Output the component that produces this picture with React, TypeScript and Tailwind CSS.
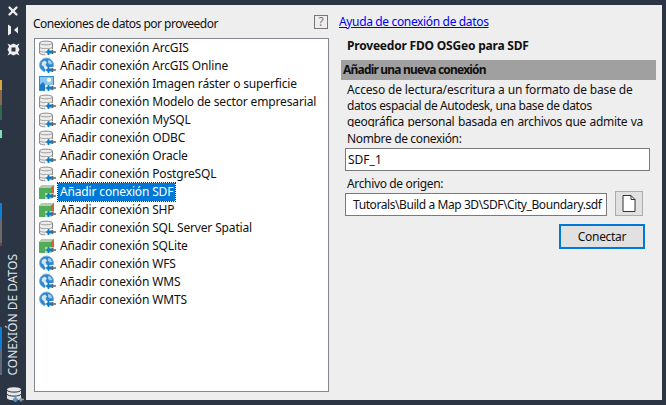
import React from 'react';
import { X } from 'lucide-react';

const Plug = () => (
  <g>
    <rect x="8" y="11.500" width="5" height="3" fill="#0f7fc4" />
    <path d="M6.500 13h2M9.500 10v6" stroke="#0f7fc4" strokeWidth="1.600" fill="none" />
    <path d="M13 13h4M13.500 11v4" stroke="#5c6670" strokeWidth="1.600" fill="none" />
  </g>
);

const DbIcon = () => (
  <svg width="18" height="18" viewBox="0 0 18 18">
    <path d="M.5 4C.5 1.500 13.500 1.500 13.500 4V14C13.500 16.500.5 16.500.5 14Z" fill="#ececec" stroke="#8a8a8a" />
    <path d="M.5 4C.5 6.400 13.500 6.400 13.500 4M.5 8C.5 10.300 13.500 10.300 13.500 8M.5 11.500C.5 13.800 13.500 13.800 13.500 11.500" fill="none" stroke="#a0a0a0" />
    <rect x="6" y="10" width="12" height="7" fill="#fff" opacity="0.8" />
    <Plug />
  </svg>
);

const GlobeIcon = () => (
  <svg width="18" height="18" viewBox="0 0 18 18">
    <circle cx="7.500" cy="8" r="7" fill="#2f86cf" stroke="#7fb4dd" />
    <path d="M3 5 6 3.500l2 2-1.500 2L8 10l-2 2.500L4.500 9.500 2.500 8Z" fill="#cfe6f7" />
    <path d="M9 3l3 1 1 3-2.500.5L9 5.500Z" fill="#9ed0f0" />
    <rect x="6" y="10" width="12" height="7" fill="#fff" opacity="0.85" />
    <Plug />
  </svg>
);

const ImageIcon = () => (
  <svg width="18" height="18" viewBox="0 0 18 18">
    <rect x="0" y="1" width="15" height="15" fill="#2f8ad2" />
    <rect x="1" y="2" width="13" height="13" fill="#8cc6ee" />
    <circle cx="10" cy="5" r="2.200" fill="#fbf6cf" />
    <path d="M1 15V10l3-3 6 8Z" fill="#1f78c4" />
    <rect x="6" y="10" width="12" height="7" fill="#fff" opacity="0.85" />
    <Plug />
  </svg>
);

const CubeIcon = () => (
  <svg width="18" height="18" viewBox="0 0 18 18">
    <path d="M0 5 3 2h12v11l-3 3H0Z" fill="#4fae57" />
    <path d="M0 5 3 2h12l-3 3Z" fill="#bdc7b4" />
    <path d="M12 5l3-3v11l-3 3Z" fill="#c8663a" />
    <rect x="6" y="10" width="12" height="7" fill="#fff" opacity="0.55" />
    <Plug />
  </svg>
);

const SidebarDb = () => (
  <svg width="18" height="18" viewBox="0 0 18 18">
    <path d="M0 3.500C0 .5 14 .5 14 3.500V12C14 15 0 15 0 12Z" fill="#e6e6e6" />
    <path d="M0 4C0 6.800 14 6.800 14 4M0 8C0 10.800 14 10.800 14 8" fill="none" stroke="#2b3543" />
    <path d="M6 13.500h5M8.500 11v5" stroke="#3f9fe4" strokeWidth="2" fill="none" />
    <path d="M12 13.500h5M14 11.500v4" stroke="#9aa3ad" strokeWidth="1.600" fill="none" />
  </svg>
);

const PinIcon = () => (
  <svg width="12" height="12" viewBox="0 0 12 12" fill="#eeeeee">
    <path d="M1 .5 4 2.500v7L1 11.500Z" />
    <path d="M11 2.500v7L7 6Z" />
  </svg>
);

const GearIcon = () => (
  <svg width="13" height="13" viewBox="0 0 13 13">
    <path d="M.5 .5 3.500 2 6.500 .5 9.500 2l3-1.500L11 3.500l1.500 3L11 9.500l1.500 3-3-1.500-3 1.500-3-1.500-3 1.500L2 9.500l-1.500-3L2 3.500Z" fill="#eeeeee" />
    <rect x="4.500" y="4.500" width="4" height="4" fill="#2b3543" />
  </svg>
);

const rows = [
  { label: 'Añadir conexión ArcGIS', icon: DbIcon },
  { label: 'Añadir conexión ArcGIS Online', icon: GlobeIcon },
  { label: 'Añadir conexión Imagen ráster o superficie', icon: ImageIcon },
  { label: 'Añadir conexión Modelo de sector empresarial', icon: DbIcon },
  { label: 'Añadir conexión MySQL', icon: DbIcon },
  { label: 'Añadir conexión ODBC', icon: DbIcon },
  { label: 'Añadir conexión Oracle', icon: DbIcon },
  { label: 'Añadir conexión PostgreSQL', icon: DbIcon },
  { label: 'Añadir conexión SDF', icon: CubeIcon, selected: true },
  { label: 'Añadir conexión SHP', icon: CubeIcon },
  { label: 'Añadir conexión SQL Server Spatial', icon: DbIcon },
  { label: 'Añadir conexión SQLite', icon: CubeIcon },
  { label: 'Añadir conexión WFS', icon: GlobeIcon },
  { label: 'Añadir conexión WMS', icon: GlobeIcon },
  { label: 'Añadir conexión WMTS', icon: GlobeIcon },
];

export default function App() {
  return (
    <div className="w-[666px] h-[405px] flex bg-[#2b3543] overflow-hidden text-[12px] leading-[16px] text-[#111] font-['Noto_Sans',sans-serif]">
      {/* sliver of the window behind the palette */}
      <div className="w-[2px] flex flex-col">
        <div className="h-[80px]" />
        <div className="h-[10px] bg-[#d9a93a]" />
        <div className="h-[15px] bg-[#8a6a4a]" />
        <div className="h-[15px] bg-[#2f6a55]" />
        <div className="h-[10px]" />
        <div className="h-[8px] bg-[#7fe0b8]" />
        <div className="h-[65px]" />
        <div className="h-[17px] bg-[#0f7fd6]" />
        <div className="h-[23px] bg-[#6a6a6a]" />
        <div className="h-[3px] bg-[#8a3a2a]" />
        <div className="h-[81px]" />
        <div className="h-[23px] bg-[#0f7fd6]" />
        <div className="h-[25px] bg-[#5a6a7a]" />
      </div>

      <aside className="w-[24px] pr-[2px] flex flex-col items-center text-[#eeeeee] pt-[4px] pb-[1px]">
        <X size={14} strokeWidth={4} />
        <div className="mt-[6px]"><PinIcon /></div>
        <div className="mt-[7px]"><GearIcon /></div>
        <div className="mt-auto mb-[10px] [writing-mode:vertical-rl] rotate-180 text-[12px] leading-[14px] text-[#dfe5ea]">
          CONEXIÓN DE DATOS
        </div>
        <div className="ml-[5px]"><SidebarDb /></div>
      </aside>

      <main className="flex-1 mt-[5px] mb-[5px] mr-[4px] bg-[#eeeeee] flex pl-[8px] pr-[6px] pt-[10px] pb-[8px]">
        <section className="w-[295px] flex flex-col">
          <h2 className="h-[23px] -ml-[1px] pt-[1px] text-[12px] font-normal tracking-[-0.5px]">Conexiones de datos por proveedor</h2>
          <ul className="flex-1 bg-white border border-[#828790] pl-[4px] tracking-[-0.15px]">
            {rows.map(({ label, icon: Icon, selected }) => (
              <li key={label} className="h-[18px] flex items-center gap-[1px]">
                <Icon />
                <span className={selected ? 'bg-[#0078d7] text-white px-[2px] h-[18px] leading-[17px] outline-1 outline-dotted outline-[#222]' : 'px-[2px]'}>{label}</span>
              </li>
            ))}
          </ul>
        </section>

        <section className="flex-1 flex flex-col ml-[-15px]">
          <div className="flex items-center h-[18px] -mt-[2px] mb-[5px]">
            <span className="w-[14px] h-[14px] border border-[#777] text-[#777] text-[12px] leading-[12px] text-center">?</span>
            <a className="ml-[11px] text-[#0000ee] underline tracking-[-0.35px]">Ayuda de conexión de datos</a>
          </div>
          <div className="pl-[27px] flex flex-col">
            <h3 className="h-[24px] pl-[6px] pt-[2px] font-bold text-[12px] tracking-[-0.2px]">Proveedor FDO OSGeo para SDF</h3>
            <div className="h-[20px] bg-[#a0a0a0] pl-[2px] font-bold text-[12px] leading-[20px] tracking-[-0.8px]">Añadir una nueva conexión</div>
            <p className="h-[47px] pl-[6px] pr-[13px] pt-[2px] overflow-hidden">
              <span className="block whitespace-nowrap tracking-[-0.15px]">Acceso de lectura/escritura a un formato de base de</span>
              <span className="block whitespace-nowrap tracking-[-0.4px]">datos espacial de Autodesk, una base de datos</span>
              <span className="block tracking-[-0.3px] [text-align-last:justify]">geográfica personal basada en archivos que admite va</span>
            </p>
            <label className="h-[16px] mt-[4px] pl-[6px] tracking-[-0.35px]">Nombre de conexión:</label>
            <div className="h-[23px] mt-[1px] ml-[4px] mr-[6px] bg-white border border-[#7a7a7a] px-[2px] leading-[21px]">SDF_1</div>
            <label className="h-[16px] mt-[5px] pl-[6px] tracking-[-0.35px]">Archivo de origen:</label>
            <div className="flex mt-[1px] ml-[4px]">
              <div className="h-[23px] w-[262px] bg-white border border-[#7a7a7a] pl-[7px] leading-[21px] overflow-hidden whitespace-nowrap tracking-[-0.42px]">Tutorals\Build a Map 3D\SDF\City_Boundary.sdf</div>
              <button className="ml-[8px] w-[28px] h-[25px] -mt-[2px] bg-[#e1e1e1] border border-[#adadad] flex items-center justify-center">
                <svg width="14" height="17" viewBox="0 0 14 17" fill="#fff" stroke="#333">
                  <path d="M1 .5h8l4 4v12H1Z" />
                  <path d="M9 .5v4h4" fill="none" />
                </svg>
              </button>
            </div>
            <div className="flex justify-end mt-[8px] mr-[11px]">
              <button className="w-[86px] h-[25px] bg-[#e1e1e1] border-2 border-[#0078d7] text-[12px] tracking-[-0.3px]">Conectar</button>
            </div>
          </div>
        </section>
      </main>
    </div>
  );
}
